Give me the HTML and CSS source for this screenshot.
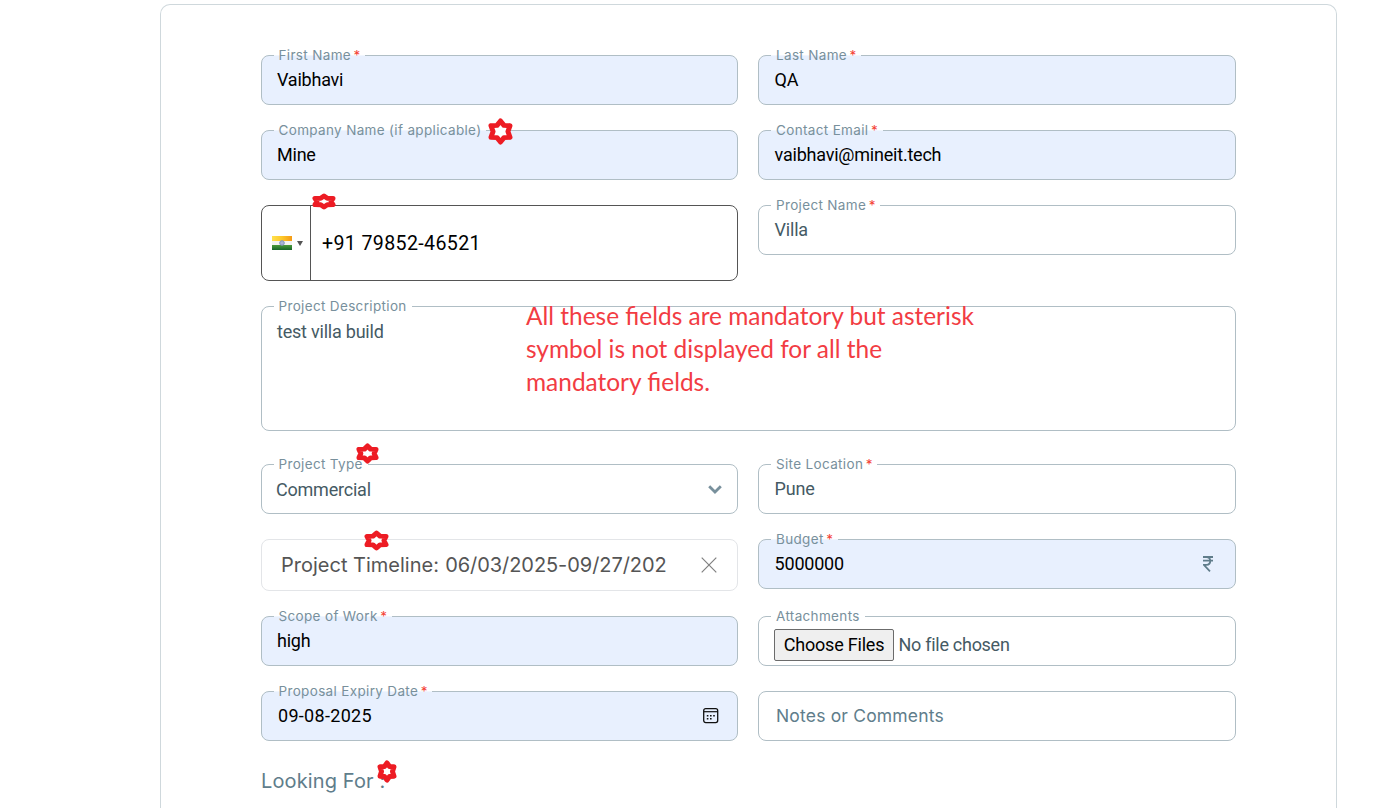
FILE: index.html
```html
<!DOCTYPE html>
<html lang="en">
<head>
<meta charset="utf-8">
<title>Project Form</title>
<link rel="stylesheet" href="styles.css">
</head>
<body>
<svg class="defs" aria-hidden="true"><symbol id="star" viewBox="0 0 12 12" preserveAspectRatio="none" overflow="visible"><polygon vector-effect="non-scaling-stroke" points="6,0 8.200,2.500 12,2.700 10.700,6 12,9.300 8.200,9.500 6,12 3.800,9.500 0,9.300 1.300,6 0,2.700 3.800,2.500"/></symbol></svg>
<main class="card">
  <div class="row">
    <div class="field filled"><span class="label">First Name<b>*</b></span><span class="value">Vaibhavi</span></div>
    <div class="field filled"><span class="label">Last Name<b>*</b></span><span class="value">QA</span></div>
  </div>
  <div class="row">
    <div class="field filled"><span class="label">Company Name (if applicable)</span><span class="value">Mine</span>
      <svg class="star star-company"><use href="#star"/></svg></div>
    <div class="field filled"><span class="label">Contact Email<b>*</b></span><span class="value">vaibhavi@mineit.tech</span></div>
  </div>
  <div class="row">
    <div class="phone">
      <div class="country">
        <svg width="20" height="14" viewBox="0 0 20 14"><defs><linearGradient id="saffron"><stop offset="0" stop-color="#ffe04d"/><stop offset=".5" stop-color="#fdc829"/><stop offset="1" stop-color="#f59a16"/></linearGradient><linearGradient id="green" x2="0" y2="1"><stop offset="0" stop-color="#4a9a3a"/><stop offset="1" stop-color="#19662b"/></linearGradient></defs><path fill="url(#saffron)" d="M0 0h20v5H0z"/><path fill="#f4f4f2" d="M0 5h20v4H0z"/><path fill="url(#green)" d="M0 9h20v5H0z"/><circle cx="10" cy="7" r="2.3" fill="#a9b4d6" stroke="#8290bd"/></svg>
        <svg width="6" height="5" viewBox="0 0 6 5"><path fill="#555" d="M0 0h6L3 5z"/></svg>
      </div>
      <span class="number">+91 79852-46521</span>
      <svg class="star star-phone"><use href="#star"/></svg>
    </div>
    <div class="field"><span class="label">Project Name<b>*</b></span><span class="value">Villa</span></div>
  </div>
  <div class="row description">
    <div class="field area"><span class="label">Project Description</span><span class="value">test villa build</span>
      <p class="note">All these fields are mandatory but asterisk<br>symbol is not displayed for all the<br>mandatory fields.</p></div>
  </div>
  <div class="row">
    <div class="field select"><span class="label">Project Type</span><span class="value">Commercial</span>
      <svg class="chevron" width="14" height="9" viewBox="0 0 14 9"><path d="M1.200 1.200 7 7l5.800-5.800" fill="none" stroke="#78909c" stroke-width="2.800"/></svg>
      <svg class="star star-type"><use href="#star"/></svg></div>
    <div class="field"><span class="label">Site Location<b>*</b></span><span class="value">Pune</span></div>
  </div>
  <div class="row">
    <div class="timeline"><span class="range">Project Timeline: <span class="dates">06/03/2025-09/27/202</span></span>
      <svg width="16" height="16" viewBox="0 0 16 16"><path d="M.7.700l14.600 14.600M15.300.700.700 15.300" stroke="#808080" stroke-width="1.200"/></svg>
      <svg class="star star-time"><use href="#star"/></svg></div>
    <div class="field filled budget"><span class="label">Budget<b>*</b></span><span class="value">5000000</span>
      <svg class="rupee" width="10" height="16" viewBox="0 0 10 16"><path d="M0 1h10M0 4.600h10M0 1.200h3.500c5 0 5 7.600 0 7.600H.8L7 15.300" fill="none" stroke="#607d8b" stroke-width="1.800"/></svg></div>
  </div>
  <div class="row">
    <div class="field filled"><span class="label">Scope of Work<b>*</b></span><span class="value">high</span></div>
    <div class="field attach"><span class="label">Attachments</span><button class="choose">Choose Files</button><span class="value none">No file chosen</span></div>
  </div>
  <div class="row">
    <div class="field filled date"><span class="label">Proposal Expiry Date<b>*</b></span><span class="value">09-08-2025</span>
      <svg class="calendar" width="16" height="16" viewBox="0 0 16 16"><rect x=".7" y=".7" width="14" height="13.900" rx="2" fill="none" stroke="#111" stroke-width="1.300"/><path d="M1 3.700h14" stroke="#111" stroke-width="1.200"/><path d="M7 7h1.600v1.600H7zM10.200 7h1.600v1.600h-1.600zM3.800 10h1.600v1.600H3.800zM7 10h1.600v1.600H7zM3.800 7h1.600v1.600H3.800z" fill="#111"/></svg></div>
    <div class="field empty"><span class="value">Notes or Comments</span></div>
  </div>
  <h2 class="looking">Looking For :<svg class="star star-looking"><use href="#star"/></svg></h2>
</main>
</body>
</html>
```
FILE: styles.css
```css
* { box-sizing: border-box; }
body { margin: 0; height: 808px; overflow: hidden; background: #fff; font-family: Roboto, sans-serif; }
.defs { display: block; width: 0; height: 0; }
.card { width: 1177px; height: 804px; margin: 4px 0 0 160px; padding: 50px 100px 0; border: 1px solid #cfd8dc; border-bottom: 0; border-radius: 10px 10px 0 0; display: flex; flex-direction: column; gap: 25px; }
.row { display: grid; grid-template-columns: 477px 478px; gap: 20px; align-items: start; }
.description { grid-template-columns: 975px; margin-bottom: 8px; }
.field { position: relative; height: 50px; border: 1px solid #b0bec5; border-radius: 8px; padding: 0 15px; display: flex; align-items: center; background: #fff; --fill: #fff; }
.filled { background: #e8f0fe; --fill: #f1f6fe; }
.label { position: absolute; left: 12px; top: -9px; height: 17px; padding: 0 5px 0 4.5px; white-space: nowrap; font: 13.5px/17px Inter, sans-serif; letter-spacing: .34px; color: #78909c; background: linear-gradient(transparent 8px, var(--fill) 8px, var(--fill) 9px, transparent 9px); }
.label b { margin-left: 2.5px; font-weight: 400; letter-spacing: 0; color: #f44336; }
.value { font-size: 18px; line-height: 24px; letter-spacing: -.22px; color: #455a64; }
.field:nth-child(2) .label { padding-left: 5px; }
.field:nth-child(2) > .label + .value { margin-left: .6px; }
.filled .value { color: #000; }
.area { height: 125px; align-items: flex-start; padding-top: 13px; }
.select .value { margin-left: -1px; padding-top: 2px; }
.chevron { margin-left: auto; }
.phone { position: relative; height: 76px; border: 1px solid #555; border-radius: 8px; display: flex; align-items: stretch; }
.country { width: 49px; border-right: 1px solid #555; display: flex; align-items: center; gap: 5px; padding-left: 10px; }
.number { align-self: center; padding-left: 11px; font-size: 19.6px; letter-spacing: .36px; color: #000; }
.timeline { position: relative; height: 52px; border: 1px solid #e3e5e8; border-radius: 8px; display: flex; align-items: center; justify-content: space-between; padding: 0 20px 0 19px; }
.range { font: 20px/26px Inter, sans-serif; color: #555; white-space: nowrap; }
.dates { letter-spacing: -.06px; margin-left: .6px; }
.budget .rupee { margin-left: auto; margin-right: 7px; }
.attach { padding-top: 7px; }
.choose { width: 120px; height: 32px; padding: 0; border: 1px solid #6b6b6b; border-radius: 2px; background: #efefef; color: #000; font: 18px Roboto, sans-serif; letter-spacing: -.2px; }
.none { margin-left: 4.5px; letter-spacing: -.28px; }
.date .value { margin-left: 1px; letter-spacing: .3px; }
.calendar { margin-left: auto; margin-right: 3px; }
.empty .value { margin-left: 2px; font: 17.5px/24px Inter, sans-serif; letter-spacing: .18px; color: #607d8b; }
.looking { position: relative; margin: 1px 0 0; font: 400 20px/28px Inter, sans-serif; letter-spacing: .12px; color: #607d8b; }
.note { position: absolute; left: 264px; top: -8px; margin: 0; width: 470px; white-space: nowrap; font: 24.45px/33px Lato, sans-serif; color: #f23c43; }
.star { position: absolute; overflow: visible; fill: #fff; stroke: #ed1c24; stroke-width: 5px; stroke-linejoin: round; }
.star-company { left: 229px; top: -10px; width: 19px; height: 21px; }
.star-phone { left: 53px; top: -10px; width: 18px; height: 11px; }
.star-type { left: 97px; top: -19px; width: 17px; height: 15px; }
.star-time { left: 105px; top: -7px; width: 19px; height: 15px; }
.star-looking { left: 119px; top: -4px; width: 14px; height: 17px; }
```
